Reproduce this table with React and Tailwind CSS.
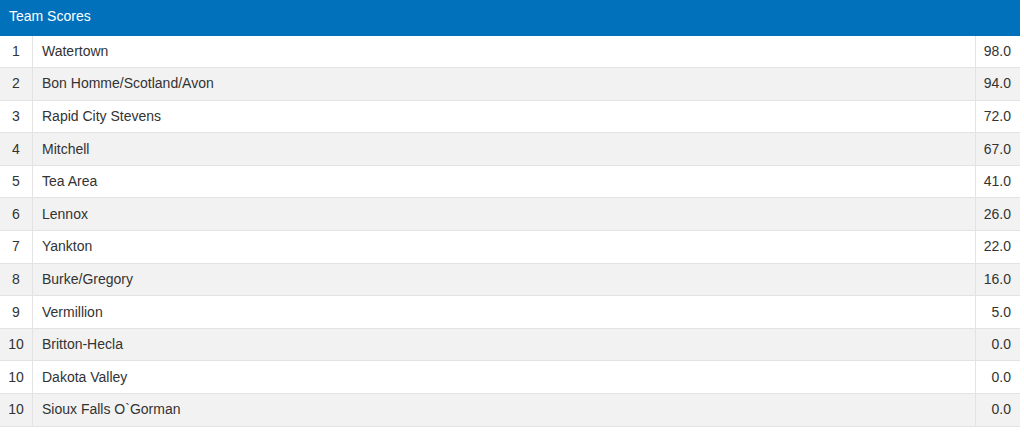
import React from "react";

const teams = [
  { rank: 1, name: "Watertown", score: "98.0" },
  { rank: 2, name: "Bon Homme/Scotland/Avon", score: "94.0" },
  { rank: 3, name: "Rapid City Stevens", score: "72.0" },
  { rank: 4, name: "Mitchell", score: "67.0" },
  { rank: 5, name: "Tea Area", score: "41.0" },
  { rank: 6, name: "Lennox", score: "26.0" },
  { rank: 7, name: "Yankton", score: "22.0" },
  { rank: 8, name: "Burke/Gregory", score: "16.0" },
  { rank: 9, name: "Vermillion", score: "5.0" },
  { rank: 10, name: "Britton-Hecla", score: "0.0" },
  { rank: 10, name: "Dakota Valley", score: "0.0" },
  { rank: 10, name: "Sioux Falls O`Gorman", score: "0.0" },
];

const App = () => {
  return (
    <div className="w-[1024px] h-[432px] bg-white font-['Liberation_Sans',Arial,sans-serif] text-[14px] text-[#333]">
      <div className="w-[1020px]">
        <div className="h-[35.5px] bg-[#0271bc] text-white flex items-center px-[9px] pb-[2px]">Team Scores</div>
        {teams.map((t, i) => (
          <div
            key={i}
            className={`flex h-[32.6px] border-b border-[#e3e3e3] ${i % 2 ? "bg-[#f2f2f2]" : "bg-white"}`}
          >
            <div className="w-[33px] flex items-center justify-center border-r border-[#e3e3e3]">{t.rank}</div>
            <div className="flex-1 flex items-center pl-[9px]">{t.name}</div>
            <div className="w-[45px] flex items-center justify-end pr-[9px] border-l border-[#e3e3e3]">{t.score}</div>
          </div>
        ))}
      </div>
    </div>
  );
};

export default App;
